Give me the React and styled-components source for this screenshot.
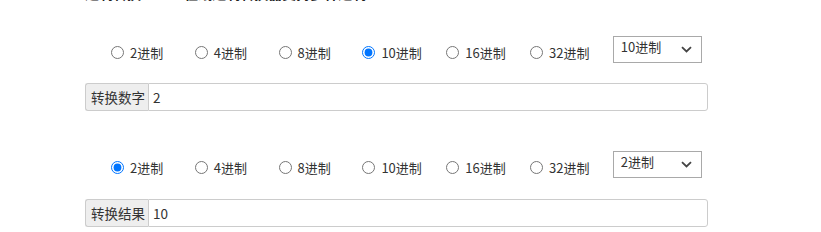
import React, { useState } from "react";
import styled, { createGlobalStyle } from "styled-components";

const Global = createGlobalStyle`
  html, body { margin: 0; padding: 0; background: #fff; }
  body {
    font-family: "Microsoft YaHei", "Noto Sans CJK SC", "Liberation Sans", sans-serif;
    color: #333;
    font-size: 13px;
  }
`;

const Page = styled.div`
  width: 623px;
  margin-left: 85px;
`;

const Heading = styled.h3`
  margin: -16px 0 0 0;
  height: 19px;
  line-height: 19px;
  font-size: 14px;
  font-weight: bold;
  color: #222;
  white-space: nowrap;
  overflow: hidden;
  word-spacing: 40px;
`;

const Section = styled.div`
  padding-top: ${(p) => p.$top}px;
`;

const Row = styled.div`
  display: flex;
  align-items: flex-start;
  height: 27px;
  padding-left: 23px;
`;

const RadioLabel = styled.label`
  display: flex;
  align-items: center;
  width: 83.8px;
  height: 18px;
  margin-top: 7px;
  font-size: 13px;
  color: #333;
  cursor: pointer;
  white-space: nowrap;
`;

const Radio = styled.input`
  width: 13px;
  height: 13px;
  margin: 0 6px 0 3px;
  accent-color: #0075ff;
`;

const SelectWrap = styled.div`
  position: relative;
  width: 89px;
  height: 27px;
  margin-left: 2px;
`;

const Select = styled.select`
  appearance: none;
  width: 100%;
  height: 100%;
  box-sizing: border-box;
  border: 1px solid #a9a9a9;
  border-radius: 0;
  background: #fff;
  padding: 0 0 6px 7px;
  font-family: inherit;
  font-size: 13px;
  color: #333;
  outline: none;
`;

const Chevron = styled.svg`
  position: absolute;
  right: 10px;
  top: 10px;
  pointer-events: none;
`;

const InputGroup = styled.div`
  display: flex;
  height: 28px;
  margin-top: ${(p) => p.$gap}px;
  box-sizing: border-box;
`;

const Addon = styled.span`
  display: flex;
  align-items: center;
  box-sizing: border-box;
  padding: 0 4px 0 5px;
  width: 63px;
  background: #eee;
  border: 1px solid #ccc;
  border-right: none;
  border-radius: 3px 0 0 3px;
  font-size: 13.5px;
  color: #333;
  white-space: nowrap;
`;

const TextInput = styled.input`
  flex: 1;
  box-sizing: border-box;
  border: 1px solid #ccc;
  border-radius: 0 3px 3px 0;
  padding: 0 4px;
  font-family: inherit;
  font-size: 13.5px;
  color: #333;
  outline: none;
`;

const bases = [2, 4, 8, 10, 16, 32];

function Converter({ name, top, value, setValue, label, text, gap }) {
  return (
    <Section $top={top}>
      <Row>
        {bases.map((b) => (
          <RadioLabel key={b}>
            <Radio
              type="radio"
              name={name}
              checked={value === b}
              onChange={() => setValue(b)}
            />
            {b}进制
          </RadioLabel>
        ))}
        <SelectWrap>
          <Select value={value} onChange={(e) => setValue(Number(e.target.value))}>
            {bases.map((b) => (
              <option key={b} value={b}>
                {b}进制
              </option>
            ))}
          </Select>
          <Chevron width="11" height="7" viewBox="0 0 11 7">
            <path d="M1 1.2 L5.5 5.5 L10 1.2" fill="none" stroke="#444" strokeWidth="1.8" />
          </Chevron>
        </SelectWrap>
      </Row>
      <InputGroup $gap={gap}>
        <Addon>{label}</Addon>
        <TextInput defaultValue={text} />
      </InputGroup>
    </Section>
  );
}

export default function App() {
  const [from, setFrom] = useState(10);
  const [to, setTo] = useState(2);
  return (
    <>
      <Global />
      <Page>
        <Heading>进制转换 在线进制转换器支持多种进制</Heading>
        <Converter name="from" top={33} value={from} setValue={setFrom} label="转换数字" text="2" gap={20} />
        <Converter name="to" top={40} value={to} setValue={setTo} label="转换结果" text="10" gap={21} />
      </Page>
    </>
  );
}
